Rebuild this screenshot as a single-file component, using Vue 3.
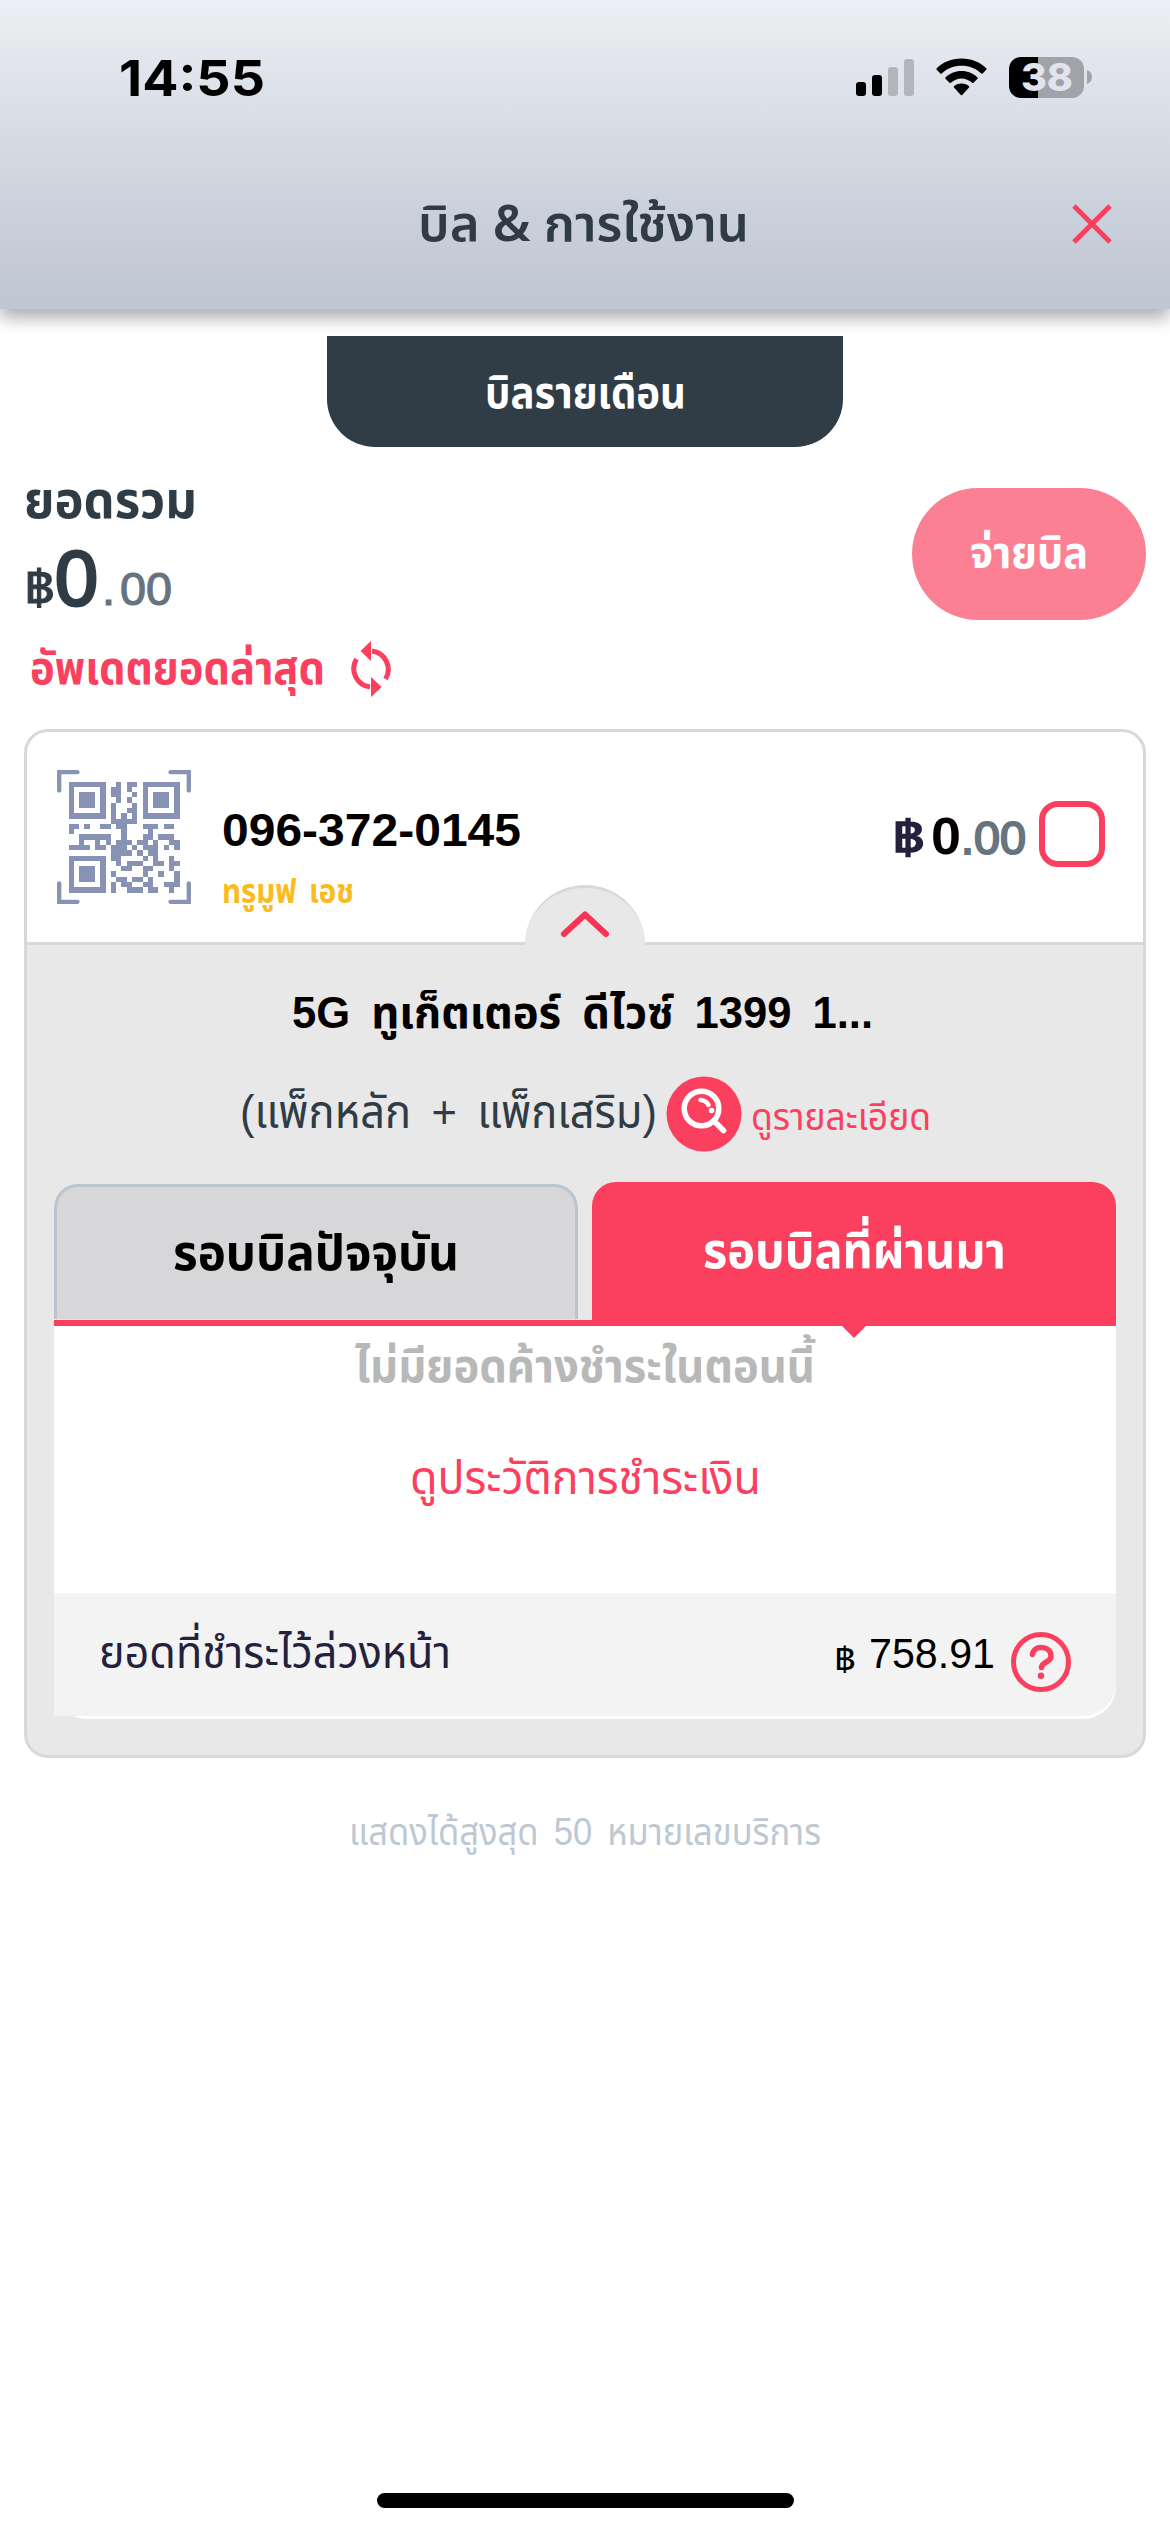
<script setup>
import { h } from 'vue'

// One line of text set to an exact measure, sitting on the given baseline.
const Line = (props) =>
  h('svg', { width: props.w, height: props.h, style: { display: 'block', overflow: 'visible', flex: 'none' } }, [
    h('text', { x: 0, y: props.b, textLength: props.w, lengthAdjust: 'spacingAndGlyphs', fill: 'currentColor' }, props.text),
  ])
Line.props = ['text', 'w', 'h', 'b']

const finder = (x, y) => `M${x} ${y}h7v7h-7zM${x + 1} ${y + 1}v5h5v-5zM${x + 2} ${y + 2}h3v3h-3z`
const rows = [
  [9, 11, 12], [8, 9, 11], [8, 9, 12], [9, 11], [8, 12], [8, 11, 12], [8, 10, 12], [8, 9, 10, 11, 12],
  [0, 1, 3, 6, 7, 9, 10, 14, 15, 16, 18, 19], [0, 10, 15], [2, 3, 4, 5, 6, 7, 10, 14, 15, 17, 18, 19],
  [2, 5, 7, 9, 10, 11, 13, 14, 16, 19, 20], [0, 1, 2, 3, 5, 6, 8, 9, 10, 12, 14, 15, 16, 18, 20],
  [8, 9, 10, 11, 13, 15, 16], [8, 9, 14, 16, 19], [9, 11, 12, 13, 16, 17, 19, 20], [10, 11, 14, 15, 19],
  [8, 14, 17, 20], [9, 10, 12, 13, 15, 20], [8, 10, 11, 14, 15, 18, 19, 20], [8, 11, 12, 13, 15, 16, 19],
]
const qrPath =
  finder(0, 0) + finder(14, 0) + finder(0, 14) +
  rows.map((cols, y) => cols.map((x) => `M${x} ${y}h1v1h-1z`).join('')).join('')
</script>

<template>
  <main class="screen">
    <header class="top">
      <div class="status">
        <Line class="time" text="14:55" :w="146" :h="60" :b="47" />
        <div class="indicators">
          <svg width="58" height="37" viewBox="0 0 58 37">
            <rect x="0" y="23" width="10" height="14" rx="3" />
            <rect x="16" y="16" width="10" height="21" rx="3" />
            <g fill="#b3b5bb"><rect x="32" y="8" width="10" height="29" rx="3" /><rect x="48" y="0" width="10" height="37" rx="3" /></g>
          </svg>
          <svg width="51" height="38" viewBox="0 0 51 38">
            <path d="M25.500 0.500C35.500 .5 44.500 4.300 50.300 10.300q.7.700 0 1.400l-3.700 3.800q-.7.600-1.400 0C40 10.400 33 7.800 25.500 7.800S11 10.400 5.800 15.500q-.7.600-1.400 0L.7 11.700q-.7-.7 0-1.400C6.500 4.300 15.500.5 25.500.5z" />
            <path d="M25.500 13c6.500 0 12 2.500 16 6.400q.7.700 0 1.400l-4 4q-.7.600-1.400 0c-3-2.700-6.500-4.300-10.600-4.300s-7.600 1.600-10.600 4.300q-.7.600-1.400 0l-4-4q-.7-.7 0-1.400c4-3.900 9.500-6.400 16-6.400z" />
            <path d="M25.500 25.500c3.200 0 5.600 1.100 7.500 2.700q.7.700 0 1.400l-6.800 7.300q-.7.700-1.400 0L18 29.600q-.7-.7 0-1.400c1.900-1.600 4.300-2.700 7.500-2.700z" />
          </svg>
          <div class="battery">
            <div class="cell"><Line class="pct" text="38" :w="52" :h="41" :b="34" /></div>
            <svg width="5" height="14" viewBox="0 0 5 14"><path d="M0 0Q5 2 5 7T0 14z" fill="#a1a3aa" /></svg>
          </div>
        </div>
      </div>
      <div class="nav">
        <Line class="title" text="บิล &amp; การใช้งาน" :w="331" :h="60" :b="46" />
        <svg class="close" width="40" height="40" viewBox="0 0 40 40"><path d="M2 2l36 36M38 2L2 38" /></svg>
      </div>
    </header>

    <div class="monthly"><Line text="บิลรายเดือน" :w="201" :h="60" :b="44" /></div>

    <section class="summary">
      <div class="totals">
        <Line class="label" text="ยอดรวม" :w="173" :h="50" :b="39" />
        <div class="amount">
          <Line class="baht" text="฿" :w="31" :h="80" :b="63" />
          <Line class="whole" text="0" :w="43" :h="80" :b="63" />
          <Line class="dot" text="." :w="13" :h="80" :b="63" />
          <Line class="cents" text="00" :w="52" :h="80" :b="63" />
        </div>
        <div class="refresh">
          <Line text="อัพเดตยอดล่าสุด" :w="295" :h="50" :b="38" />
          <svg width="42" height="56" viewBox="0 0 42 56">
            <g fill="none" stroke="#fb3f5f" stroke-width="5"><path d="M6.500 18A18.500 18.500 0 0 0 20 46" /><path d="M35.500 38A18.500 18.500 0 0 0 22 10" /></g>
            <path fill="#fb3f5f" d="M21 0v20L10.500 10zM21 36v20L31.500 46z" />
          </svg>
        </div>
      </div>
      <button class="pay"><Line text="จ่ายบิล" :w="118" :h="60" :b="43" /></button>
    </section>

    <section class="card">
      <div class="account">
        <svg class="qr" width="134" height="134" viewBox="0 0 134 134">
          <g fill="none" stroke="#8792b4" stroke-width="4.300" stroke-linecap="round"><path d="M20.500 2.200H2.200V20.500M113.500 2.200h18.300v18.300M20.500 131.800H2.200v-18.300M113.500 131.800h18.300v-18.300" /></g>
          <path fill="#8792b4" shape-rendering="crispEdges" transform="translate(11.500 11.500) scale(5.286)" :d="qrPath" fill-rule="evenodd" />
        </svg>
        <div class="owner">
          <Line class="phone" text="096-372-0145" :w="299" :h="60" :b="48" />
          <Line class="brand" text="ทรูมูฟ เอช" :w="132" :h="40" :b="45" />
        </div>
        <div class="due">
          <Line class="d-baht" text="฿" :w="33" :h="60" :b="47" />
          <Line class="d-whole" text="0" :w="30" :h="60" :b="47" />
          <Line class="d-cents" text=".00" :w="65" :h="60" :b="47" />
          <span class="check"></span>
        </div>
        <div class="bump">
          <svg width="50" height="28" viewBox="0 0 50 28"><path d="M4 24L25 4.500 46 24" /></svg>
        </div>
      </div>

      <div class="detail">
        <Line class="plan" text="5G ทูเก็ตเตอร์ ดีไวซ์ 1399 1..." :w="581" :h="60" :b="45" />
        <div class="packs">
          <Line class="sub" text="(แพ็กหลัก + แพ็กเสริม)" :w="417" :h="76" :b="52" />
          <svg width="76" height="76" viewBox="0 0 76 76">
            <circle cx="38" cy="38" r="37.500" fill="#fb3f5f" />
            <g fill="none" stroke="#fff" stroke-linecap="round"><circle cx="35.500" cy="32.500" r="17.300" stroke-width="5.500" /><path stroke-width="5.500" d="M48 45l9.500 9.500" /><path stroke-width="4.500" d="M34.500 24q6 .5 8 5" /></g>
            <circle cx="45.500" cy="34.500" r="2.800" fill="#fff" />
          </svg>
          <Line class="more" text="ดูรายละเอียด" :w="180" :h="76" :b="54" />
        </div>

        <div class="tabs">
          <div class="tab"><Line text="รอบบิลปัจจุบัน" :w="286" :h="60" :b="43" /></div>
          <div class="tab on"><Line text="รอบบิลที่ผ่านมา" :w="303" :h="60" :b="43" /></div>
        </div>
        <div class="panel">
          <div class="messages">
            <Line class="none" text="ไม่มียอดค้างชำระในตอนนี้" :w="460" :h="60" :b="49" />
            <Line class="history" text="ดูประวัติการชำระเงิน" :w="351" :h="60" :b="44" />
          </div>
          <div class="prepaid">
            <Line class="p-label" text="ยอดที่ชำระไว้ล่วงหน้า" :w="352" :h="60" :b="45" />
            <div class="p-value">
              <Line class="p-baht" text="฿" :w="22" :h="60" :b="48" />
              <Line class="p-num" text="758.91" :w="126" :h="60" :b="45" />
              <svg width="60" height="60" viewBox="0 0 60 60" fill="none" stroke="#fb3f5f" stroke-width="5" stroke-linecap="round">
                <circle cx="30" cy="30" r="27.500" />
                <path stroke-width="5.500" d="M21.500 22.500C22 17.500 26 15.500 30 15.500c5.500 0 10 3 10 8.500 0 7-9.500 5.500-9.500 11.500" /><path stroke-width="6.400" d="M30 43.800h.01" />
              </svg>
            </div>
          </div>
        </div>
      </div>
    </section>

    <Line class="note" text="แสดงได้สูงสุด 50 หมายเลขบริการ" :w="472" :h="60" :b="45" />
    <div class="home"></div>
  </main>
</template>

<style>
body { background: #fff; }
</style>

<style scoped>
.screen { box-sizing: border-box; width: 1170px; height: 2532px; display: flex; flex-direction: column; align-items: center; overflow: hidden; font-family: "Liberation Sans", "Noto Sans Thai", "Noto Sans", sans-serif; color: #2f3c46; background: #fff; }
.top { flex: none; width: 1170px; height: 309px; background: linear-gradient(#eeeff4 0, #e8e9ed 40px, #e1e4ed 68px, #d1d8e1 165px, #c5cad7 258px, #bfc9d3 290px, #bdc8d2 309px); box-shadow: 0 9px 16px rgba(0, 0, 0, .32); }
.status { display: flex; justify-content: space-between; height: 110px; padding: 49px 78px 0 119px; box-sizing: border-box; }
.time { color: #000; font: 700 50px Inter, sans-serif; }
.indicators { display: flex; align-items: center; height: 56px; gap: 22px; }
.battery { display: flex; align-items: center; gap: 3px; }
.cell { width: 75px; height: 41px; border-radius: 12px; background: linear-gradient(90deg, #000 29px, #a1a3aa 29px); display: flex; justify-content: center; }
.pct { color: #e1e4ec; font: 800 38px Inter, sans-serif; }
.nav { display: flex; align-items: center; justify-content: flex-end; padding: 85px 58px 0 0; }
.title { font: 600 50px "Noto Sans Thai", "Noto Sans", sans-serif; margin-right: 323px; }
.close { fill: none; stroke: #fb3f5f; stroke-width: 5; margin-top: -2px; }
.monthly { flex: none; width: 516px; height: 111px; margin-top: 27px; border-radius: 0 0 48px 48px; background: #303c46; color: #fff; font-size: 44px; font-weight: 700; display: flex; justify-content: center; padding-top: 28px; box-sizing: border-box; }
.summary { flex: none; width: 1122px; height: 282px; display: flex; justify-content: space-between; }
.totals { padding-top: 32px; }
.label { font-size: 51px; font-weight: 700; }
.amount { display: flex; margin-top: 13px; }
.baht { font-size: 48px; stroke: currentColor; stroke-width: 1px; }
.whole { font-size: 78px; stroke: currentColor; stroke-width: 3px; }
.dot, .cents { font-size: 46px; color: #66747f; stroke: currentColor; stroke-width: 1.2px; }
.dot { margin: 0 5px 0 4px; }
.refresh { display: flex; gap: 25px; margin: 24px 0 0 6px; color: #fb3f5f; font-size: 46px; font-weight: 700; }
.refresh > svg:last-child { margin-top: -5px; }
.pay { width: 234px; height: 132px; margin-top: 41px; border: 0; border-radius: 66px; background: #fc8093; color: #fff; font: 700 44px "Liberation Sans", "Noto Sans Thai", "Noto Sans", sans-serif; display: flex; justify-content: center; padding: 37px 0 0; }
.card { flex: none; width: 1122px; height: 1029px; box-sizing: border-box; border: 3px solid #d8d8d8; border-radius: 24px; background: #e8e8e8; overflow: hidden; }
.account { position: relative; height: 213px; box-sizing: border-box; border-bottom: 3px solid #d8d8d8; background: #fff; display: flex; }
.qr { margin: 38px 0 0 30px; }
.owner { padding: 66px 0 0 31px; flex: 1; }
.phone { font-size: 47px; font-weight: 700; color: #050000; }
.brand { font-size: 34px; font-weight: 700; color: #fbbb20; word-spacing: 5px; }
.due { display: flex; padding-top: 75px; margin-right: 38px; }
.d-baht { font-size: 46px; color: #24213d; stroke: currentColor; stroke-width: 1.5px; margin-right: 6px; }
.d-whole { font-size: 52px; font-weight: 700; color: #050000; }
.d-cents { font-size: 46px; color: #66747f; stroke: currentColor; stroke-width: 2px; }
.check { width: 66px; height: 66px; box-sizing: border-box; border: 6px solid #fb3f5f; border-radius: 19px; margin: -6px 0 0 13px; }
.bump { position: absolute; left: 498px; bottom: -3px; width: 120px; height: 60px; box-sizing: border-box; border-top: 3px solid #d8d8d8; border-radius: 60px 60px 0 0; background: #e8e8e8; display: flex; justify-content: center; padding-top: 22px; }
.bump svg { fill: none; stroke: #fb3353; stroke-width: 6; stroke-linecap: round; stroke-linejoin: round; }
.detail { display: flex; flex-direction: column; align-items: center; padding-top: 38px; }
.plan { font-size: 44px; font-weight: 700; color: #050000; word-spacing: 9px; margin-right: 5px; }
.packs { display: flex; gap: 9px; margin: 33px 0 0; }
.sub { font-size: 47px; word-spacing: 9px; }
.more { font-size: 38px; color: #fb3f5f; }
.tabs { width: 1062px; height: 144px; margin-top: 30px; display: flex; align-items: flex-end; justify-content: space-between; background: linear-gradient(#fb3f5f, #fb3f5f) bottom / 100% 6px no-repeat; }
.tab { width: 524px; height: 135px; margin-bottom: 7px; box-sizing: border-box; border: 3px solid #bac4cc; border-bottom: 0; border-radius: 24px 24px 0 0; background: #d7d7d9; color: #000; font-size: 50px; font-weight: 700; display: flex; justify-content: center; padding-top: 40px; }
.tab.on { position: relative; height: 144px; margin: 0; border: 0; background: #fb3f5f; color: #fff; padding-top: 43px; }
.tab.on::after { content: ""; position: absolute; left: 250px; top: 100%; border: 12px solid transparent; border-bottom: 0; border-top-color: #fb3f5f; }
.panel { width: 1062px; height: 393px; background: #fff; border-radius: 0 0 33px 33px; }
.messages { height: 267px; display: flex; flex-direction: column; align-items: center; padding-top: 7px; box-sizing: border-box; }
.none { font-size: 46px; font-weight: 700; color: #b8b8b8; }
.history { font-size: 46px; color: #fb3f5f; margin-top: 57px; }
.prepaid { height: 123px; box-sizing: border-box; background: #f3f3f3; border-radius: 0 0 33px 0; display: flex; justify-content: space-between; padding: 30px 45px 0; color: #24213d; }
.p-label { font-size: 45px; }
.p-value { display: flex; }
.p-baht { font-size: 34px; color: #000; margin-right: 13px; }
.p-num { font-size: 42px; color: #000; margin-right: 16px; }
.p-value > svg:last-child { margin-top: 9px; }
.note { font-size: 38px; color: #bdc8d3; margin-top: 42px; word-spacing: 6px; }
.home { flex: none; width: 417px; height: 15px; border-radius: 8px; background: #000; margin: auto 0 24px; }
</style>
